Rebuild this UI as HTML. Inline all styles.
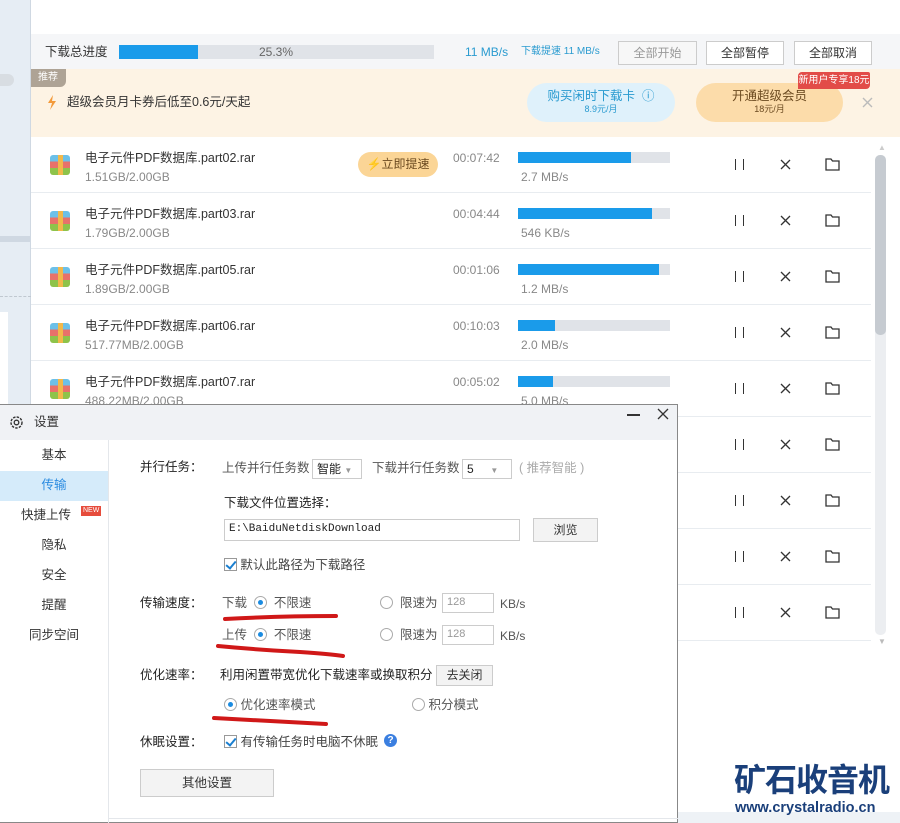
<!DOCTYPE html>
<html><head><meta charset="utf-8"><style>
*{margin:0;padding:0;box-sizing:border-box}
body{width:900px;height:823px;overflow:hidden;position:relative;background:#fff;font-family:"Liberation Sans","Noto Sans CJK SC",sans-serif;font-size:12px;color:#333;line-height:1.2}
.a{position:absolute;white-space:nowrap}
.btn{position:absolute;border:1px solid #ccc;background:#f7f7f7;text-align:center;font-size:12px;color:#333}
.row{position:absolute;left:31px;width:840px;height:56px;border-bottom:1px solid #e8ecf0}
.ico{position:absolute;left:19px;top:18px;width:20px;height:20px;border-radius:3px;overflow:hidden;background:linear-gradient(#6cc0e8 0 33%,#e8716a 33% 66%,#8ec34a 66%)}
.ico:after{content:"";position:absolute;left:8px;top:0;width:5px;height:20px;background:#f2b84a}
.nm{position:absolute;left:54px;top:14px;font-size:12.5px;color:#333}
.sz{position:absolute;left:54px;top:33px;font-size:12px;color:#888}
.tm{position:absolute;left:422px;top:14px;color:#888;font-size:12px}
.pb{position:absolute;left:487px;top:15px;width:152px;height:11px;background:#e0e3e8}
.pb i{display:block;height:100%;background:#1a9bea}
.sp{position:absolute;left:490px;top:33px;color:#888}
.pa{position:absolute;left:704px;top:22px;width:9px;height:11px;border-left:1.5px solid #333;border-right:1.5px solid #333}
.x{position:absolute;left:749px;top:22px}
.fd{position:absolute;left:794px;top:21px}
.rd{display:inline-block;width:13px;height:13px;border:1px solid #aaa;border-radius:50%;vertical-align:-2px;position:relative;background:#fff}
.rd.on:after{content:"";position:absolute;left:3px;top:3px;width:5px;height:5px;border-radius:50%;background:#1a8be0}
.cb{display:inline-block;width:13px;height:13px;border:1px solid #999;vertical-align:-2px;position:relative;background:#fff}
.cb:after{content:"";position:absolute;left:3px;top:0px;width:4px;height:8px;border:solid #1a7fd0;border-width:0 2px 2px 0;transform:rotate(40deg)}
.lb{position:absolute;left:140px;font-size:12.5px;color:#222}
.in{position:absolute;border:1px solid #ccc;background:#fff;color:#999;font-size:11px;padding:2px 4px}
.nav{position:absolute;left:0;width:108px;text-align:center;font-size:12.5px;color:#333}
</style></head><body>
<div class="a" style="left:0;top:0;width:31px;height:823px;background:#e6edf4;border-right:1px solid #cfd8e2"></div>
<div class="a" style="left:0;top:74px;width:14px;height:12px;background:#d8dde2;border-radius:0 6px 6px 0"></div>
<div class="a" style="left:0;top:236px;width:31px;height:6px;background:#cfd8e2"></div>
<div class="a" style="left:0;top:296px;width:31px;border-top:1px dashed #c0c8d0"></div>
<div class="a" style="left:0;top:312px;width:8px;height:92px;background:#fff"></div>
<div class="a" style="left:31px;top:34px;width:869px;height:35px;background:#f5f6f8"></div>
<div class="a" style="left:45px;top:45px;font-size:12.5px;color:#333">下载总进度</div>
<div class="a" style="left:119px;top:45px;width:315px;height:14px;background:#e0e3e8"><div style="width:79px;height:14px;background:#1a9bea"></div></div>
<div class="a" style="left:259px;top:45px;color:#666;font-size:12px">25.3%</div>
<div class="a" style="left:465px;top:45px;color:#2a9bd0;font-size:12px">11 MB/s</div>
<div class="a" style="left:521px;top:46px;color:#2a9bd0;font-size:10px">下载提速 11 MB/s</div>
<div class="btn" style="left:618px;top:41px;width:79px;height:24px;line-height:22px;color:#999">全部开始</div>
<div class="btn" style="left:706px;top:41px;width:78px;height:24px;line-height:22px;background:#fff">全部暂停</div>
<div class="btn" style="left:794px;top:41px;width:78px;height:24px;line-height:22px;background:#fff">全部取消</div>
<div class="a" style="left:31px;top:69px;width:869px;height:68px;background:#fdf3e4"></div>
<div class="a" style="left:31px;top:69px;width:35px;height:18px;background:#aea395;color:#fff;font-size:10px;line-height:18px;padding-left:7px;border-radius:0 0 6px 0">推荐</div>
<svg class="a" style="left:47px;top:95px" width="10" height="15"><path d="M6 0L1 8h4l-2 7 6-9H5z" fill="#f39a3a"/></svg>
<div class="a" style="left:67px;top:95px;font-size:12.5px;color:#333">超级会员月卡券后低至0.6元/天起</div>
<div class="a" style="left:527px;top:83px;width:148px;height:39px;border-radius:20px;background:#dff1fb;text-align:center;color:#2a9bd0"><div style="font-size:12.5px;margin-top:6px">购买闲时下载卡 &nbsp;ⓘ</div><div style="font-size:9px">8.9元/月</div></div>
<div class="a" style="left:696px;top:83px;width:147px;height:39px;border-radius:20px;background:#fcdcaa;text-align:center;color:#6b4a20"><div style="font-size:12.5px;margin-top:6px">开通超级会员</div><div style="font-size:9px">18元/月</div></div>
<div class="a" style="left:798px;top:72px;width:72px;height:17px;background:#e24c48;color:#fff;font-size:10px;line-height:17px;text-align:center;border-radius:4px 2px 4px 0">新用户专享18元</div>
<svg class="a" style="left:862px;top:97px" width="11" height="11"><path d="M1 1L10 10M10 1L1 10" stroke="#bbb" stroke-width="1.4"/></svg>
<div class="a" style="left:878px;top:143px;color:#ccc;font-size:8px">▲</div>
<div class="a" style="left:875px;top:155px;width:11px;height:480px;background:#eceef1;border-radius:5px"></div>
<div class="a" style="left:875px;top:155px;width:11px;height:180px;background:#c6cbd1;border-radius:5px"></div>
<div class="a" style="left:878px;top:637px;color:#bbb;font-size:8px">▼</div>
<div class="row" style="top:137px"><div class="ico"></div><div class="nm">电子元件PDF数据库.part02.rar</div><div class="sz">1.51GB/2.00GB</div>
<div class="a" style="left:327px;top:15px;width:80px;height:25px;border-radius:13px;background:#fbd596;color:#6b4a20;font-size:12px;line-height:25px;text-align:center"><span style="color:#f5a623">⚡</span>立即提速</div>
<div class="tm">00:07:42</div><div class="pb"><i style="width:113px"></i></div><div class="sp">2.7 MB/s</div><div class="pa"></div><svg class="x" width="11" height="11"><path d="M1 1L10 10M10 1L1 10" stroke="#333" stroke-width="1.3"/></svg><svg class="fd" width="15" height="13"><path d="M1 1h5l1.5 2H14v9H1z" fill="none" stroke="#333" stroke-width="1.3"/></svg></div>
<div class="row" style="top:193px"><div class="ico"></div><div class="nm">电子元件PDF数据库.part03.rar</div><div class="sz">1.79GB/2.00GB</div><div class="tm">00:04:44</div><div class="pb"><i style="width:134px"></i></div><div class="sp">546 KB/s</div><div class="pa"></div><svg class="x" width="11" height="11"><path d="M1 1L10 10M10 1L1 10" stroke="#333" stroke-width="1.3"/></svg><svg class="fd" width="15" height="13"><path d="M1 1h5l1.5 2H14v9H1z" fill="none" stroke="#333" stroke-width="1.3"/></svg></div>
<div class="row" style="top:249px"><div class="ico"></div><div class="nm">电子元件PDF数据库.part05.rar</div><div class="sz">1.89GB/2.00GB</div><div class="tm">00:01:06</div><div class="pb"><i style="width:141px"></i></div><div class="sp">1.2 MB/s</div><div class="pa"></div><svg class="x" width="11" height="11"><path d="M1 1L10 10M10 1L1 10" stroke="#333" stroke-width="1.3"/></svg><svg class="fd" width="15" height="13"><path d="M1 1h5l1.5 2H14v9H1z" fill="none" stroke="#333" stroke-width="1.3"/></svg></div>
<div class="row" style="top:305px"><div class="ico"></div><div class="nm">电子元件PDF数据库.part06.rar</div><div class="sz">517.77MB/2.00GB</div><div class="tm">00:10:03</div><div class="pb"><i style="width:37px"></i></div><div class="sp">2.0 MB/s</div><div class="pa"></div><svg class="x" width="11" height="11"><path d="M1 1L10 10M10 1L1 10" stroke="#333" stroke-width="1.3"/></svg><svg class="fd" width="15" height="13"><path d="M1 1h5l1.5 2H14v9H1z" fill="none" stroke="#333" stroke-width="1.3"/></svg></div>
<div class="row" style="top:361px"><div class="ico"></div><div class="nm">电子元件PDF数据库.part07.rar</div><div class="sz">488.22MB/2.00GB</div><div class="tm">00:05:02</div><div class="pb"><i style="width:35px"></i></div><div class="sp">5.0 MB/s</div><div class="pa"></div><svg class="x" width="11" height="11"><path d="M1 1L10 10M10 1L1 10" stroke="#333" stroke-width="1.3"/></svg><svg class="fd" width="15" height="13"><path d="M1 1h5l1.5 2H14v9H1z" fill="none" stroke="#333" stroke-width="1.3"/></svg></div>
<div class="row" style="top:417px"><div class="pa"></div><svg class="x" width="11" height="11"><path d="M1 1L10 10M10 1L1 10" stroke="#333" stroke-width="1.3"/></svg><svg class="fd" width="15" height="13"><path d="M1 1h5l1.5 2H14v9H1z" fill="none" stroke="#333" stroke-width="1.3"/></svg></div>
<div class="row" style="top:473px"><div class="pa"></div><svg class="x" width="11" height="11"><path d="M1 1L10 10M10 1L1 10" stroke="#333" stroke-width="1.3"/></svg><svg class="fd" width="15" height="13"><path d="M1 1h5l1.5 2H14v9H1z" fill="none" stroke="#333" stroke-width="1.3"/></svg></div>
<div class="row" style="top:529px"><div class="pa"></div><svg class="x" width="11" height="11"><path d="M1 1L10 10M10 1L1 10" stroke="#333" stroke-width="1.3"/></svg><svg class="fd" width="15" height="13"><path d="M1 1h5l1.5 2H14v9H1z" fill="none" stroke="#333" stroke-width="1.3"/></svg></div>
<div class="row" style="top:585px"><div class="pa"></div><svg class="x" width="11" height="11"><path d="M1 1L10 10M10 1L1 10" stroke="#333" stroke-width="1.3"/></svg><svg class="fd" width="15" height="13"><path d="M1 1h5l1.5 2H14v9H1z" fill="none" stroke="#333" stroke-width="1.3"/></svg></div>
<div class="a" style="left:677px;top:812px;width:223px;height:11px;background:#eef2f6"></div>
<div class="a" style="left:734px;top:758px;font-size:32px;font-weight:bold;color:#1a3f7a;letter-spacing:-1px;font-family:'Noto Sans CJK SC',sans-serif;line-height:40px">矿石收音机</div>
<div class="a" style="left:735px;top:800px;font-size:14.5px;font-weight:bold;color:#1a3f7a">www.crystalradio.cn</div>
<div class="a" style="left:0;top:404px;width:678px;height:419px;background:#fff;border:1px solid #888;border-left:none"></div>
<div class="a" style="left:0;top:405px;width:677px;height:35px;background:#f0f2f5"></div>
<svg class="a" style="left:9px;top:415px" width="15" height="15" viewBox="0 0 15 15"><circle cx="7.5" cy="7.5" r="5.5" fill="none" stroke="#333" stroke-width="1.4" stroke-dasharray="2.5 1.2"/><circle cx="7.5" cy="7.5" r="2.3" fill="none" stroke="#333" stroke-width="1.3"/></svg>
<div class="a" style="left:34px;top:415px;font-size:12.5px">设置</div>
<div class="a" style="left:627px;top:414px;width:13px;height:1.5px;background:#333"></div>
<svg class="a" style="left:657px;top:408px" width="12" height="12"><path d="M1 1L11 11M11 1L1 11" stroke="#333" stroke-width="1.3"/></svg>
<div class="a" style="left:108px;top:440px;width:1px;height:383px;background:#e4e7eb"></div>
<div class="a" style="left:0;top:471px;width:108px;height:30px;background:#d5ebfa"></div>
<div class="nav" style="top:448px">基本</div>
<div class="nav" style="top:478px;color:#2a8be0">传输</div>
<div class="nav" style="top:508px;left:-8px">快捷上传</div>
<div class="a" style="left:81px;top:506px;background:#e64c3c;color:#fff;font-size:7px;padding:0 2px;line-height:10px">NEW</div>
<div class="nav" style="top:538px">隐私</div>
<div class="nav" style="top:568px">安全</div>
<div class="nav" style="top:598px">提醒</div>
<div class="nav" style="top:628px">同步空间</div>
<div class="lb" style="top:460px">并行任务：</div>
<div class="a" style="left:222px;top:461px;color:#555;font-size:12.5px">上传并行任务数</div>
<div class="in" style="left:312px;top:459px;width:50px;height:20px;color:#222;font-size:12px">智能 <span style="color:#999;font-size:8px">▼</span></div>
<div class="a" style="left:372px;top:461px;color:#555;font-size:12.5px">下载并行任务数</div>
<div class="in" style="left:462px;top:459px;width:50px;height:20px;color:#222;font-size:12px">5 &nbsp;&nbsp;&nbsp;&nbsp;<span style="color:#999;font-size:8px">▼</span></div>
<div class="a" style="left:519px;top:461px;color:#aaa;font-size:12.5px">( 推荐智能 )</div>
<div class="a" style="left:224px;top:496px;font-size:12.5px;color:#222">下载文件位置选择：</div>
<div class="in" style="left:224px;top:519px;width:296px;height:22px;color:#222;font-family:'Liberation Mono',monospace;font-size:11px;padding-top:3px">E:\BaiduNetdiskDownload</div>
<div class="btn" style="left:533px;top:518px;width:65px;height:24px;line-height:22px;background:#f3f3f3">浏览</div>
<div class="a" style="left:224px;top:558px"><span class="cb"></span> <span style="color:#444;font-size:12.5px">默认此路径为下载路径</span></div>
<div class="lb" style="top:596px">传输速度：</div>
<div class="a" style="left:222px;top:596px;color:#555;font-size:12.5px">下载 &nbsp;<span class="rd on"></span>&nbsp; 不限速</div>
<div class="a" style="left:380px;top:596px;color:#555;font-size:12.5px"><span class="rd"></span>&nbsp; 限速为</div>
<div class="in" style="left:442px;top:593px;width:52px;height:20px">128</div>
<div class="a" style="left:500px;top:597px;color:#555">KB/s</div>
<div class="a" style="left:222px;top:628px;color:#555;font-size:12.5px">上传 &nbsp;<span class="rd on"></span>&nbsp; 不限速</div>
<div class="a" style="left:380px;top:628px;color:#555;font-size:12.5px"><span class="rd"></span>&nbsp; 限速为</div>
<div class="in" style="left:442px;top:625px;width:52px;height:20px">128</div>
<div class="a" style="left:500px;top:629px;color:#555">KB/s</div>
<div class="lb" style="top:668px">优化速率：</div>
<div class="a" style="left:220px;top:668px;color:#222;font-size:12.5px">利用闲置带宽优化下载速率或换取积分</div>
<div class="btn" style="left:436px;top:665px;width:57px;height:21px;line-height:19px;background:#f3f3f3">去关闭</div>
<div class="a" style="left:224px;top:698px;color:#555;font-size:12.5px"><span class="rd on"></span> 优化速率模式</div>
<div class="a" style="left:412px;top:698px;color:#555;font-size:12.5px"><span class="rd"></span> 积分模式</div>
<div class="lb" style="top:735px">休眠设置：</div>
<div class="a" style="left:224px;top:735px;color:#444;font-size:12.5px"><span class="cb"></span> 有传输任务时电脑不休眠</div>
<div class="a" style="left:384px;top:734px;width:13px;height:13px;border-radius:50%;background:#3b7fe0;color:#fff;font-size:10px;text-align:center;line-height:13px;font-weight:bold">?</div>
<div class="btn" style="left:140px;top:769px;width:134px;height:28px;line-height:26px;background:#f3f3f3;font-size:12.5px">其他设置</div>
<div class="a" style="left:108px;top:818px;width:570px;height:1px;background:#e4e7eb"></div>
<svg class="a" style="left:0;top:0" width="680" height="823"><g fill="none" stroke="#d01818" stroke-width="4" stroke-linecap="round"><path d="M225 619 Q280 616 336 616"/><path d="M218 646 Q260 650 300 652 Q330 654 343 656"/><path d="M214 718 Q270 721 326 724"/></g></svg>
</body></html>
